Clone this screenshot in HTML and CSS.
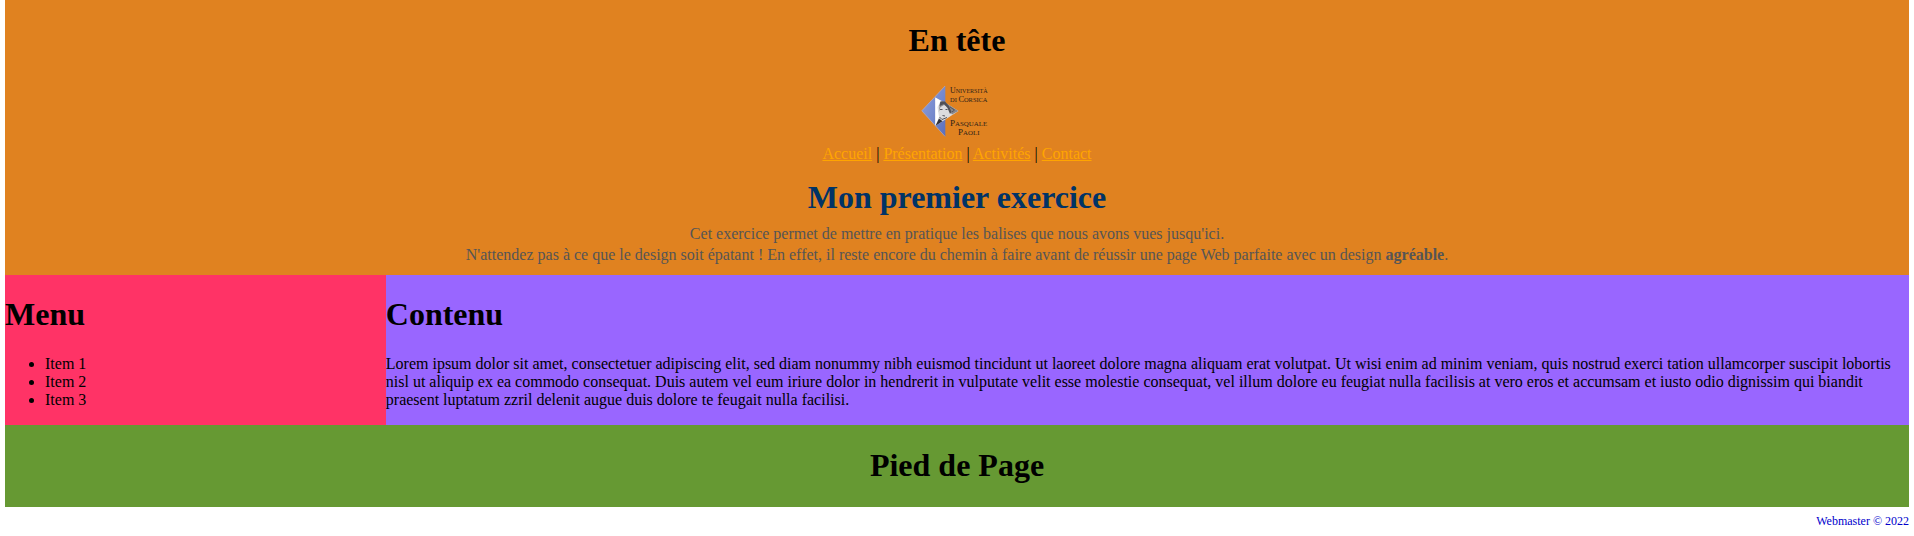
FILE: index.html
```html
<!DOCTYPE html>
<html lang="fr">
<head>
<meta charset="utf-8">
<title>Mon premier exercice</title>
<link rel="stylesheet" href="styles.css">
</head>
<body>
<header class="entete">
  <h1>En tête</h1>
  <svg class="logo" viewBox="0 0 70 58" role="img" aria-label="Università di Corsica Pasquale Paoli">
    <defs>
      <linearGradient id="bleu" x1="0" y1="0" x2="1" y2="1">
        <stop offset="0" stop-color="#8fa0dc"/>
        <stop offset="0.55" stop-color="#7488cc"/>
        <stop offset="1" stop-color="#5c6eba"/>
      </linearGradient>
    </defs>
    <path d="M23.3 4.8V55.8L-.4 29.8Z" fill="url(#bleu)"/>
    <path d="M23 5L-.2 29.8L23 55.4" fill="none" stroke="#c0b0bc" stroke-width=".6"/>
    <path d="M13.3 16.5L23.3 21.8L36.5 29.9L13.3 45Z" fill="#dcdcde"/>
    <path d="M13.3 16.5L19 20L15.5 26L17 36L13.3 45Z" fill="#fff"/>
    <path d="M18 21L21 20L27 24L36.3 29.9L30 33.5L27.5 30L26 26L22 24L18.5 26L16.8 31Z" fill="#88888c"/>
    <path d="M18.5 20.5L23 20.5L27 25L29.5 31L28 33L25.5 27L22 23L17.5 25Z" fill="#505056"/>
    <path d="M28 26L32.5 29L30 31M18 28.5H20.5M23.5 28.5H25.5M20.5 34.5L23 35M17.5 36L20 38.5L25 36.5" fill="none" stroke="#55555b" stroke-width="1"/>
    <path d="M13.5 44.8L17 37.5L20.5 40.2Z" fill="#303038"/>
    <g class="logo-texte">
      <text x="28" y="12.2" textLength="37.5" lengthAdjust="spacingAndGlyphs"><tspan class="capitale">U</tspan>NIVERSITÀ</text>
      <text x="28" y="21" textLength="37.5" lengthAdjust="spacingAndGlyphs">DI <tspan class="capitale">C</tspan>ORSICA</text>
      <text x="28" y="44.9" textLength="37.3" lengthAdjust="spacingAndGlyphs"><tspan class="capitale">P</tspan>ASQUALE</text>
      <text x="36" y="53.6" textLength="21.5" lengthAdjust="spacingAndGlyphs"><tspan class="capitale">P</tspan>AOLI</text>
    </g>
  </svg>
  <nav class="liens"><a href="#">Accueil</a> | <a href="#">Présentation</a> | <a href="#">Activités</a> | <a href="#">Contact</a></nav>
  <h1 class="titre">Mon premier exercice</h1>
  <p class="description">Cet exercice permet de mettre en pratique les balises que nous avons vues jusqu'ici.<br>
  N'attendez pas à ce que le design soit épatant ! En effet, il reste encore du chemin à faire avant de réussir une page Web parfaite avec un design <strong>agréable</strong>.</p>
</header>
<div class="milieu">
  <aside class="menu">
    <h1>Menu</h1>
    <ul>
      <li>Item 1</li>
      <li>Item 2</li>
      <li>Item 3</li>
    </ul>
  </aside>
  <main class="contenu">
    <h1>Contenu</h1>
    <p>Lorem ipsum dolor sit amet, consectetuer adipiscing elit, sed diam nonummy nibh euismod tincidunt ut laoreet dolore magna aliquam erat volutpat. Ut wisi enim ad minim veniam, quis nostrud exerci tation ullamcorper suscipit lobortis nisl ut aliquip ex ea commodo consequat. Duis autem vel eum iriure dolor in hendrerit in vulputate velit esse molestie consequat, vel illum dolore eu feugiat nulla facilisis at vero eros et accumsam et iusto odio dignissim qui biandit praesent luptatum zzril delenit augue duis dolore te feugait nulla facilisi.</p>
  </main>
</div>
<footer class="pied">
  <h1>Pied de Page</h1>
</footer>
<p class="copyright">Webmaster © 2022</p>
</body>
</html>
```
FILE: styles.css
```css
body {
  margin: 0 5px;
  background: #fff;
  color: #000;
  font: 16px/18px "Liberation Serif", "Times New Roman", serif;
}

h1 {
  margin: 0;
  padding: 22px 0 21px;
  font-size: 32px;
  line-height: 37px;
}

.entete {
  height: 275px;
  display: flow-root;
  background: #e08220;
  text-align: center;
}

.logo {
  display: block;
  width: 70px;
  height: 58px;
  margin: 1px auto 6px;
  overflow: visible;
}

.logo-texte {
  font-family: "Liberation Serif", serif;
  font-size: 6.9px;
  fill: #2c1e18;
}

.capitale {
  font-size: 9px;
}

.titre {
  padding: 16px 0 0;
  color: #036;
}

.liens a {
  color: #ffa500;
}

.description {
  margin: 7px 0 0;
  line-height: 21px;
  color: #555;
}

.milieu {
  display: flex;
  height: 150px;
}

.milieu h1 {
  padding: 21px 0 22px;
}

.menu {
  width: 20%;
  background: #f36;
}

.menu ul {
  margin: 0;
  padding-left: 40px;
}

.contenu {
  width: 80%;
  background: #96f;
}

.contenu p {
  margin: 0;
}

.pied {
  height: 82px;
  background: #693;
  text-align: center;
}

.copyright {
  margin: 7px 0 0;
  font-size: 12px;
  line-height: 14px;
  text-align: right;
  color: #00c;
}
```
